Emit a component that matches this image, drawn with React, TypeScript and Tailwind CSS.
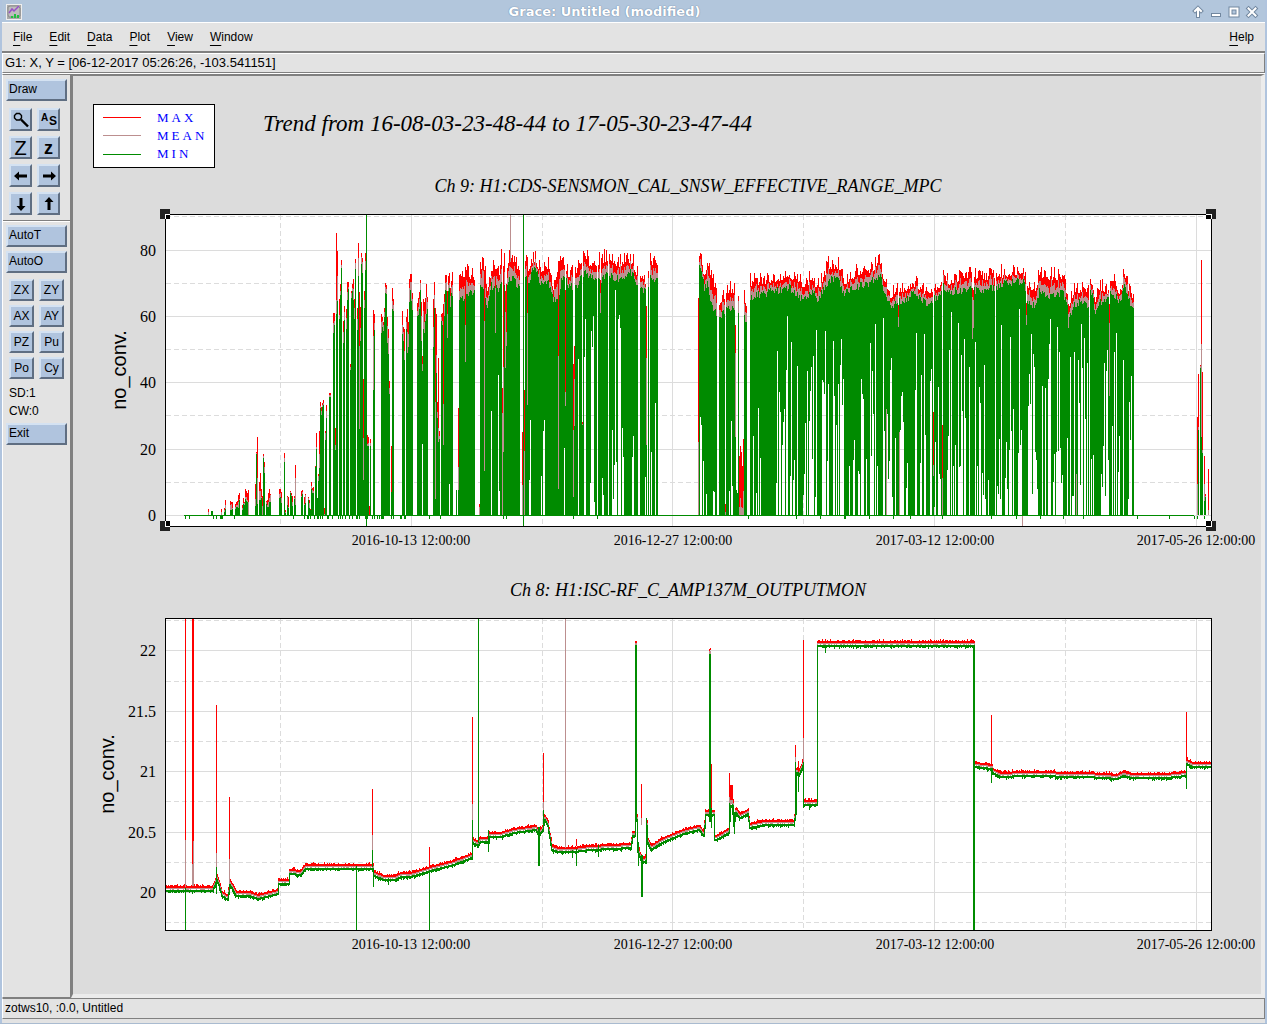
import type { ReactNode } from "react";

const RED = "#ff0000";
const BROWN = "#bc8f8f";
const GREEN = "#008b00";
const GRID = "#dcdcdc";

type Bar = [x: number, max: number, mean: number, min: number];
type Point = [x: number, y: number];

const ZERO = 515;

// small repeatable noise so the traces look the same on every render
function noise(x: number, seed: number) {
  const v = Math.sin(x * 12.9898 + seed * 78.233) * 43758.5453;
  return v - Math.floor(v);
}

const box = (x: number, top: number, bottom: number, w = 1) =>
  bottom > top ? `M${x} ${top}h${w}V${bottom}h${-w}z` : "";

function lerp(points: number[][], x: number, key: number) {
  if (x <= points[0][0]) return points[0][key];
  for (let i = 1; i < points.length; i++) {
    const a = points[i - 1];
    const b = points[i];
    if (x <= b[0]) {
      return a[key] + ((b[key] - a[key]) * (x - a[0])) / (b[0] - a[0] || 1);
    }
  }
  return points[points.length - 1][key];
}

/* ---------- range chart ---------- */

const sparse: Bar[] = [
  [208, 509, 512, 515], [211, 511, 511, 511], [212, 511, 511, 511], [221, 509, 512, 515],
  [224, 508, 510, 512], [225, 500, 505, 509], [230, 501, 505, 510], [231, 502, 504, 510],
  [232, 502, 508, 509], [235, 504, 507, 509], [236, 502, 505, 507], [237, 501, 505, 507],
  [238, 495, 502, 508], [239, 493, 499, 500], [242, 505, 508, 510], [243, 498, 503, 504],
  [244, 502, 503, 505], [245, 489, 497, 499], [246, 491, 497, 501], [247, 493, 500, 502],
  [248, 490, 502, 515], [255, 484, 499, 506], [256, 452, 453, 454], [257, 437, 478, 504],
  [259, 482, 491, 500], [260, 473, 491, 500], [261, 489, 497, 498], [262, 496, 506, 515],
  [263, 454, 456, 458], [264, 462, 467, 473], [266, 501, 502, 504], [267, 500, 505, 507],
  [268, 493, 502, 507], [269, 489, 498, 502], [270, 494, 495, 502], [279, 489, 494, 498],
  [280, 489, 493, 497], [281, 492, 498, 503], [284, 453, 458, 462], [285, 510, 512, 513],
  [287, 496, 497, 505], [288, 497, 507, 508], [290, 491, 492, 493], [291, 493, 495, 496],
  [292, 496, 502, 506], [294, 496, 498, 499], [295, 465, 478, 505], [301, 491, 496, 497],
  [302, 490, 492, 494], [304, 497, 504, 505], [305, 494, 495, 503], [308, 497, 498, 500],
  [309, 500, 503, 508], [310, 509, 510, 510], [311, 482, 486, 489], [312, 488, 490, 493],
  [313, 487, 491, 493], [315, 466, 467, 467], [316, 433, 447, 449], [317, 498, 498, 498],
  [318, 474, 476, 481], [319, 431, 454, 468], [320, 402, 406, 408], [321, 407, 411, 415],
  [322, 403, 405, 407], [323, 400, 403, 405], [324, 508, 514, 515], [325, 431, 433, 440],
  [326, 405, 411, 418], [329, 393, 395, 397], [330, 393, 395, 397], [333, 313, 323, 333],
  [334, 313, 321, 325], [335, 428, 445, 450], [336, 233, 300, 314], [337, 251, 276, 301],
  [339, 299, 315, 319], [340, 284, 291, 295], [341, 260, 265, 268], [343, 321, 332, 343],
  [344, 306, 312, 320], [346, 309, 318, 329], [347, 282, 292, 300], [348, 282, 287, 289],
  [350, 364, 367, 370], [351, 291, 293, 298], [352, 284, 288, 291], [353, 279, 289, 300],
  [354, 299, 308, 319], [355, 259, 263, 269], [357, 308, 319, 330], [358, 243, 258, 276],
  [359, 292, 346, 429], [360, 307, 328, 341], [361, 253, 257, 264], [362, 258, 262, 273],
  [363, 379, 438, 480], [364, 291, 300, 308], [365, 253, 261, 270], [367, 435, 444, 446],
  [368, 437, 443, 446], [369, 506, 515, 515], [370, 439, 443, 446], [373, 310, 336, 390],
  [374, 314, 323, 330], [381, 314, 322, 333], [382, 317, 321, 327], [383, 322, 325, 331],
  [384, 308, 312, 317], [385, 283, 287, 293], [386, 285, 289, 294], [387, 317, 326, 343],
  [388, 329, 338, 354], [389, 381, 388, 394], [391, 446, 492, 492], [392, 288, 301, 309],
  [393, 299, 305, 311], [402, 311, 325, 334], [403, 327, 332, 341], [404, 329, 351, 360],
  [406, 317, 322, 329], [407, 309, 332, 353], [408, 322, 334, 347], [409, 279, 288, 302],
  [410, 274, 282, 290], [411, 274, 282, 301], [412, 293, 299, 310], [417, 303, 311, 316],
  [418, 298, 307, 315], [419, 292, 299, 309], [420, 280, 283, 290], [421, 302, 316, 341],
  [422, 356, 364, 371], [423, 299, 311, 329], [424, 302, 322, 333], [425, 298, 314, 321],
  [426, 284, 297, 314], [427, 297, 302, 309], [433, 299, 327, 347], [434, 282, 295, 308],
  [435, 308, 402, 499], [436, 314, 355, 373], [437, 402, 412, 418], [438, 358, 428, 442],
  [439, 431, 436, 439], [441, 314, 317, 321], [442, 313, 321, 325], [443, 304, 404, 445],
  [444, 294, 302, 316], [445, 275, 283, 290], [446, 275, 282, 291], [447, 291, 314, 338],
  [448, 276, 285, 291], [449, 273, 283, 288], [450, 288, 296, 307], [451, 281, 287, 293],
  [452, 272, 285, 296], [456, 490, 490, 490], [458, 408, 467, 490],
];

// columns that drop out of the dense bands
const dropouts: Bar[] = [
  [465, 267, 325, 362], [479, 504, 507, 515], [484, 270, 321, 471], [495, 269, 288, 333],
  [502, 388, 413, 515], [503, 266, 367, 452], [505, 291, 312, 368], [506, 284, 332, 346],
  [522, 432, 485, 515], [524, 390, 451, 515], [527, 257, 313, 405], [558, 261, 356, 489],
  [565, 290, 392, 406], [573, 364, 430, 497], [574, 346, 379, 426], [582, 422, 424, 425],
  [600, 280, 293, 313], [646, 306, 358, 445], [698, 298, 442, 515], [725, 504, 512, 515],
  [735, 325, 353, 437], [736, 490, 490, 490], [737, 493, 493, 493], [738, 296, 301, 313],
  [739, 456, 507, 515], [740, 446, 498, 515], [741, 452, 507, 515], [742, 466, 508, 515],
  [743, 439, 491, 515], [898, 305, 317, 327], [933, 412, 465, 476], [942, 425, 478, 515],
  [972, 288, 297, 339], [973, 290, 300, 328], [1026, 303, 315, 325], [1068, 304, 314, 328],
  [1109, 304, 323, 396], [1197, 417, 484, 515], [1198, 374, 427, 430], [1200, 365, 366, 368],
  [1201, 260, 344, 437], [1202, 372, 450, 453], [1204, 456, 484, 501], [1205, 494, 496, 497],
  [1208, 469, 510, 515],
];

// envelopes of the dense bands: x, max, min
const bands: number[][][] = [
  [[459, 273, 300], [474, 277, 290]],
  [
    [480, 265, 284], [484, 268, 290], [487, 288, 306], [491, 272, 285], [494, 262, 285],
    [499, 272, 290], [501, 256, 280], [504, 262, 285], [507, 270, 285], [509, 258, 275],
    [515, 262, 280], [519, 275, 288],
  ],
  [
    [525, 260, 275], [528, 268, 285], [532, 260, 268], [536, 262, 270], [540, 270, 282],
    [548, 266, 280], [553, 288, 300], [557, 270, 300], [561, 262, 280], [565, 262, 275],
    [567, 275, 286], [577, 270, 285], [584, 258, 270], [590, 264, 275], [600, 262, 280],
    [608, 258, 272], [620, 265, 280], [626, 258, 272], [632, 262, 272], [637, 275, 283],
  ],
  [[640, 273, 285], [645, 284, 292]],
  [[648, 273, 285], [650, 260, 274], [657, 266, 280]],
  [[699, 262, 268], [702, 265, 275], [704, 278, 288], [707, 265, 280], [710, 275, 300], [716, 290, 312]],
  [[719, 302, 318], [724, 300, 310], [726, 290, 308], [734, 290, 308]],
  [[744, 298, 312], [746, 305, 325]],
  [
    [750, 284, 295], [765, 281, 292], [790, 275, 287], [800, 284, 297], [806, 284, 298],
    [812, 277, 288], [817, 291, 301], [828, 266, 279], [838, 266, 277], [843, 283, 292],
    [857, 273, 285], [867, 273, 283], [880, 262, 275], [885, 288, 295], [890, 295, 305],
    [907, 288, 297], [913, 283, 293], [926, 292, 302], [940, 285, 294], [943, 268, 281],
    [946, 283, 292], [970, 274, 287], [977, 279, 290], [995, 275, 286], [1003, 275, 283],
    [1023, 270, 279], [1027, 284, 300], [1035, 290, 305], [1039, 275, 290], [1050, 277, 295],
    [1063, 277, 292], [1069, 305, 316], [1073, 293, 305], [1083, 288, 299], [1088, 294, 305],
    [1090, 276, 286], [1095, 300, 310], [1100, 288, 300], [1108, 291, 300], [1111, 278, 290],
    [1120, 293, 302], [1124, 271, 284], [1128, 288, 297], [1133, 298, 309],
  ],
];

// bottom gaps, x:y in thirds of a unit from the block origin; y = 0 empties the column
const gapBlocks: [number, string][] = [
  [160, "787:716"],
  [
    420,
    "88:837 214:618 235:510 238:858 328:825 331:645 364:813 370:678 373:645 433:729 475:462 493:456 496:342 511:834 514:378 517:426 520:333 523:891 532:0 547:819 550:870 565:0 577:675 580:882 583:780 586:255 589:771 595:342 598:330 601:369 607:669 610:756 637:756 640:693 676:816 682:0 688:0 694:741 706:594",
  ],
  [
    680,
    "61:636 64:660 70:768 79:867 100:858 103:861 148:858 154:648 157:843 220:693 229:864 235:609 241:759 289:834 292:438 298:561 301:621 307:720 310:651 313:612 319:495 322:333 331:813 334:411 340:825 343:765 352:483 370:870 373:807 376:654 382:498 388:648 391:558 394:486 397:762 400:453 406:876 409:375 427:525 430:531 433:567 436:378 442:768 445:537 460:408 463:573 469:660 475:537 481:480 484:402 487:600 490:522 508:783 520:765 523:705 535:798 538:807 544:522 547:567 550:582 559:762 571:414 574:753 577:498 580:627 586:357 592:783 610:339 613:678 619:612 622:627 625:822 628:768 631:495 634:459 637:876 646:699 658:681 661:675 664:573 667:561 670:651 679:849 682:774 706:555 709:384 721:774 724:510 733:387 736:690 751:528 754:492 763:906 766:711 775:546 778:807 781:822",
  ],
  [
    940,
    "1:822 22:795 25:693 28:435 34:321 40:783 46:720 55:354 58:786 61:783 64:450 67:618 73:402 76:639 88:486 106:411 112:783 118:546 121:594 127:804 130:870 133:480 136:882 145:825 166:0 172:843 175:867 178:702 181:882 184:360 196:819 199:711 202:852 208:735 211:396 214:678 220:612 235:744 238:312 241:720 244:675 265:603 268:507 271:597 274:387 277:867 280:447 283:486 286:741 289:765 292:852 307:543 316:549 325:522 328:417 331:342 340:831 343:747 349:741 352:366 355:738 358:441 361:729 364:834 367:810 382:699 391:456 397:873 400:873 403:441 409:807 415:465 418:594 421:840 424:357 427:489 433:399 436:642 442:474 448:0 454:762 460:750 484:807 487:846 490:723 493:474 496:873 499:498 502:435 505:765 517:663 523:441 529:384 535:801 538:693 550:465 565:882 568:591 571:705 574:513",
  ],
];

const ticksBelow = [
  185, 189, 213, 216, 220, 221, 222, 234, 293, 304, 307, 308, 310, 314, 317, 318, 320, 322, 327,
  328, 332, 338, 340, 342, 345, 349, 352, 356, 357, 359, 365, 366, 367, 372, 374, 377, 379, 381,
  382, 383, 391, 393, 400, 401, 404, 405, 429, 440, 503, 506, 573, 597, 748, 796, 820, 844, 845,
  869, 893, 910, 942, 991, 1016, 1040, 1063, 1083, 1137, 1169, 1194, 1197, 1204,
];

function rangePaths() {
  const columns = new Map<number, number[]>();
  for (const band of bands) {
    for (let x = band[0][0]; x <= band[band.length - 1][0]; x++) {
      const n = noise(x, 1);
      const max = Math.round(lerp(band, x, 1) + 3 - n * n * 14);
      const min = Math.round(lerp(band, x, 2) - 3 + noise(x, 2) * 8);
      const mean = Math.round(max + (min - max) * (0.4 + noise(x, 3) * 0.3));
      columns.set(x, [max, mean, min, ZERO]);
    }
  }
  for (const [x, max, mean, min] of [...sparse, ...dropouts]) {
    columns.set(x, [max, mean, min, ZERO]);
  }
  for (const [origin, list] of gapBlocks) {
    for (const item of list.split(" ")) {
      const [dx, dy] = item.split(":").map(Number);
      const x = origin + Math.floor(dx / 3);
      const column = columns.get(x);
      if (dy === 0) columns.delete(x);
      else if (column) column[3] = 205 + Math.round(dy / 3);
    }
  }
  let max = "";
  let mean = "";
  let min = "";
  columns.forEach(([a, b, c, bottom], x) => {
    max += box(x, a, b);
    mean += box(x, b, c);
    min += box(x, c, bottom);
  });
  mean += box(510, 215, 262) + box(886, 409, ZERO) + box(899, 432, ZERO);
  mean += box(1076, 474, ZERO) + box(1022, 516, 526) + box(547, 491, ZERO);
  min += box(366, 215, 526) + box(523, 215, 526) + box(184, 515, 516, 1010);
  min += ticksBelow.map((x) => box(x, 516, 519)).join("");
  return { max, mean, min };
}

/* ---------- RF output chart ---------- */

const level: Point[] = [
  [166, 888], [212, 888], [216, 877], [218, 882], [221, 893], [227, 897], [229, 882], [232, 887],
  [235, 893], [248, 893], [257, 896], [277, 891], [278, 881], [288, 881], [289, 871], [300, 872],
  [305, 866], [372, 866], [373, 873], [383, 877], [395, 877], [400, 874], [410, 874], [430, 868],
  [453, 862], [471, 855], [472, 840], [477, 843], [480, 839], [488, 839], [489, 834], [500, 834],
  [513, 830], [535, 827], [538, 833], [542, 827], [544, 817], [547, 823], [551, 847], [557, 849],
  [573, 849], [590, 847], [630, 845], [632, 833], [634, 833], [635, 817], [636, 817], [637, 848],
  [640, 857], [642, 860], [645, 858], [646, 823], [647, 840], [650, 847], [663, 839], [683, 831],
  [698, 827], [703, 833], [705, 812], [713, 812], [714, 837], [718, 836], [728, 830], [730, 803],
  [732, 803], [733, 823], [735, 810], [739, 815], [747, 811], [749, 825], [764, 822], [793, 822],
  [795, 810], [796, 770], [798, 773], [802, 763], [803, 802], [816, 802], [817, 643], [973, 643],
  [974, 764], [991, 766], [992, 770], [999, 774], [1024, 773], [1086, 774], [1117, 776],
  [1122, 773], [1131, 775], [1165, 775], [1185, 773], [1186, 761], [1192, 764], [1210, 764],
];

// x, top, bottom, width
const redSpikes = [
  [185, 619, 840, 1], [192, 619, 864, 1], [193, 619, 841, 1], [216, 705, 853, 1],
  [229, 797, 859, 1], [372, 789, 835, 1], [429, 847, 868, 1], [472, 717, 804, 1],
  [543, 753, 802, 1], [576, 839, 846, 1], [635, 641, 643, 2], [641, 784, 818, 1],
  [709, 649, 651, 1], [710, 648, 650, 1], [711, 764, 810, 1], [729, 773, 797, 1],
  [730, 785, 800, 3], [795, 745, 757, 1], [798, 761, 772, 1], [803, 640, 738, 1],
  [974, 706, 718, 1], [991, 715, 768, 1], [1186, 712, 762, 1],
];
const brownSpikes = [
  [185, 840, 887, 1], [192, 864, 886, 1], [193, 841, 886, 1], [216, 853, 867, 1],
  [229, 859, 882, 1], [372, 835, 850, 1], [472, 804, 820, 1], [543, 802, 810, 1],
  [565, 619, 848, 1], [635, 643, 645, 2], [641, 818, 825, 1], [709, 651, 654, 2],
  [729, 797, 803, 1], [730, 800, 804, 3], [795, 757, 762, 1], [803, 738, 762, 1],
  [974, 718, 721, 1],
];
const greenSpikes = [
  [185, 888, 930, 1], [216, 867, 894, 1], [356, 866, 930, 1], [372, 850, 867, 1],
  [373, 874, 887, 1], [388, 878, 885, 1], [429, 870, 930, 1], [472, 820, 860, 1],
  [478, 619, 843, 1], [488, 830, 852, 1], [538, 827, 866, 2], [543, 810, 826, 1],
  [572, 850, 858, 1], [576, 849, 866, 1], [598, 845, 857, 1], [635, 645, 820, 2],
  [638, 842, 866, 1], [641, 855, 897, 2], [646, 818, 864, 1], [709, 654, 822, 2],
  [711, 808, 828, 1], [729, 803, 833, 1], [732, 804, 815, 1], [734, 812, 834, 1],
  [795, 762, 815, 1], [798, 772, 792, 1], [803, 762, 803, 1], [809, 804, 810, 1],
  [825, 645, 653, 1], [973, 646, 930, 1], [974, 721, 930, 1], [991, 768, 783, 1],
  [1186, 764, 789, 1],
];

function trace(offset: number, thickness: number, seed: number, grow: number) {
  let d = "";
  for (let x = 166; x <= 1210; x++) {
    const a = lerp(level, x - 1, 1);
    const b = lerp(level, x, 1);
    const top = Math.round(Math.min(a, b)) + offset;
    const bottom = Math.round(Math.max(a, b)) + offset + thickness;
    const n = noise(x, seed);
    const extra = n > 0.93 ? grow * 2 : n > 0.55 ? grow : 0;
    d += box(x, top + Math.min(extra, 0), bottom + Math.max(extra, 0));
  }
  return d;
}

const spikes = (list: number[][]) =>
  list.map(([x, top, bottom, w]) => box(x, top, bottom, w)).join("");

const range = rangePaths();
const output = {
  max: trace(-2, 2, 4, -1) + spikes(redSpikes),
  mean: trace(0, 1, 5, 1) + spikes(brownSpikes),
  min: trace(2, 2, 6, 1) + spikes(greenSpikes),
};

type PlotProps = {
  top: number;
  title: string;
  labelX: number;
  ticks: [number, string][];
  minor: number[];
  series: { max: string; mean: string; min: string };
};

function Plot({ top, title, labelX, ticks, minor, series }: PlotProps) {
  const bottom = top + 312;
  return (
    <g>
      <text x="688" y={top - 22} textAnchor="middle" className="text-[18px] italic">
        {title}
      </text>
      <rect x="165" y={top} width="1047" height="313" fill="#fff" />
      <g stroke={GRID} shapeRendering="crispEdges">
        {ticks.map(([y]) => (
          <line key={y} x1="166" x2="1211" y1={y + 0.5} y2={y + 0.5} />
        ))}
        {minor.map((y) => (
          <line key={y} x1="166" x2="1211" y1={y + 0.5} y2={y + 0.5} strokeDasharray="5 3" />
        ))}
        {[411, 672, 934, 1196].map((x) => (
          <line key={x} x1={x + 0.5} x2={x + 0.5} y1={top} y2={bottom} />
        ))}
        {[280, 542, 803, 1065].map((x) => (
          <line key={x} x1={x + 0.5} x2={x + 0.5} y1={top + 1} y2={bottom} strokeDasharray="5 3" />
        ))}
      </g>
      <g shapeRendering="crispEdges">
        <path d={series.max} fill={RED} />
        <path d={series.mean} fill={BROWN} />
        <path d={series.min} fill={GREEN} />
        <rect x="165.5" y={top + 0.5} width="1046" height="312" fill="none" stroke="#000" />
      </g>
      {ticks.map(([y, label]) => (
        <text key={label} x="156" y={y + 6} textAnchor="end" className="text-[16px]">
          {label}
        </text>
      ))}
      {[
        [411, "2016-10-13 12:00:00"],
        [673, "2016-12-27 12:00:00"],
        [935, "2017-03-12 12:00:00"],
        [1196, "2017-05-26 12:00:00"],
      ].map(([x, label]) => (
        <text key={label} x={x} y={bottom + 19} textAnchor="middle" className="text-[14px]">
          {label}
        </text>
      ))}
      <text
        transform={`translate(${labelX} ${top + 156}) rotate(-90)`}
        textAnchor="middle"
        className="font-['Liberation_Sans',sans-serif] text-[20px]"
      >
        no_conv.
      </text>
    </g>
  );
}

function Handle({ x, y, right, low }: { x: number; y: number; right?: boolean; low?: boolean }) {
  const ix = right ? x : x + 6;
  const iy = low ? y : y + 6;
  return (
    <g shapeRendering="crispEdges">
      <rect x={x} y={y} width="10" height="10" fill="#222" />
      <rect x={right ? x : x + 5} y={low ? y : y + 5} width={right ? 6 : 5} height={low ? 6 : 5} fill="#fff" />
      <rect x={ix} y={iy} width={right ? 5 : 4} height={low ? 5 : 4} fill="#000" />
    </g>
  );
}

function Graph() {
  return (
    <svg
      viewBox="73 76 1188 918"
      className="block w-full font-['Liberation_Serif',serif]"
      role="img"
      aria-label="Trend graphs"
    >
      <rect x="93.5" y="104.5" width="121" height="63" fill="#fff" stroke="#000" />
      {[
        { name: "MAX", color: RED, line: 117, text: 122 },
        { name: "MEAN", color: BROWN, line: 135, text: 140 },
        { name: "MIN", color: GREEN, line: 154, text: 158 },
      ].map((item) => (
        <g key={item.name}>
          <rect x="103" y={item.line} width="38" height="1" fill={item.color} />
          <text x="157" y={item.text} fill="#0000ff" className="text-[13px] tracking-[3px]">
            {item.name}
          </text>
        </g>
      ))}
      <text x="263" y="131" className="text-[23px] italic">
        Trend from 16-08-03-23-48-44 to 17-05-30-23-47-44
      </text>
      <Plot
        top={214}
        title="Ch 9: H1:CDS-SENSMON_CAL_SNSW_EFFECTIVE_RANGE_MPC"
        labelX={126}
        ticks={[[250, "80"], [316, "60"], [382, "40"], [449, "20"], [515, "0"]]}
        minor={[216, 283, 349, 415, 482]}
        series={range}
      />
      <Plot
        top={618}
        title="Ch 8: H1:ISC-RF_C_AMP137M_OUTPUTMON"
        labelX={114}
        ticks={[[650, "22"], [711, "21.5"], [771, "21"], [832, "20.5"], [892, "20"]]}
        minor={[620, 681, 741, 801, 862, 922]}
        series={output}
      />
      <Handle x={160} y={209} />
      <Handle x={1206} y={209} right />
      <Handle x={160} y={521} low />
      <Handle x={1206} y={521} right low />
    </svg>
  );
}

/* ---------- window parts ---------- */

function ToolButton({ size, label, children }: { size: "wide" | "icon" | "pair"; label?: string; children: ReactNode }) {
  const shape = {
    wide: "h-[22px] w-full px-px pb-0.5 text-left",
    icon: "flex size-[23px] items-center justify-center",
    pair: "h-[22px] w-[25px] text-center",
  }[size];
  return (
    <button
      aria-label={label}
      className={`border-2 border-t-[#d4e2f2] border-r-[#5f6e82] border-b-[#5f6e82] border-l-[#d4e2f2] bg-[#b0c4de] leading-4 ${shape}`}
    >
      {children}
    </button>
  );
}

function MenuItem({ name }: { name: string }) {
  return (
    <button>
      <span className="underline underline-offset-4">{name[0]}</span>
      {name.slice(1)}
    </button>
  );
}

const arrows = [
  ["Scroll left", "M1 8l5-4.500v3h8v3H6v3z"],
  ["Scroll right", "M15 8l-5-4.500v3H2v3h8v3z"],
  ["Scroll down", "M8 15l-4.500-5h3V2h3v8h3z"],
  ["Scroll up", "M8 1L3.500 6h3v8h3V6h3z"],
];

function Toolbar() {
  return (
    <div className="w-[69px] border border-t-[#808080] border-r-[#808080] border-b-[#808080] border-l-white bg-[#e3e3e3]">
      <div className="border-b border-[#808080] px-[3px] pt-1 pb-[5px]">
        <ToolButton size="wide">Draw</ToolButton>
        <div className="mt-[7px] grid grid-cols-[23px_23px] gap-[5px] pl-[3px]">
          <ToolButton size="icon" label="Zoom">
            <svg viewBox="0 0 16 16" className="size-4" fill="none" stroke="#000">
              <path d="M3.500 1.500h3l2 2v2.500l-2 2h-3l-2-2v-2.500z" strokeWidth="1.400" />
              <path d="M8 7.500l7 7" strokeWidth="2.400" />
            </svg>
          </ToolButton>
          <ToolButton size="icon" label="Autoscale">
            <svg viewBox="0 0 18 18" className="size-[18px] font-['Liberation_Sans',sans-serif] font-bold">
              <text x="1" y="10" className="text-[10px]">A</text>
              <text x="9" y="14" className="text-[12px]">S</text>
            </svg>
          </ToolButton>
          <ToolButton size="icon" label="Zoom in">
            <span className="text-[20px] leading-5">Z</span>
          </ToolButton>
          <ToolButton size="icon" label="Zoom out">
            <span className="text-[18px] leading-4 font-bold">z</span>
          </ToolButton>
          {arrows.map(([label, d]) => (
            <ToolButton key={label} size="icon" label={label}>
              <svg viewBox="0 0 16 16" className="size-4">
                <path d={d} />
              </svg>
            </ToolButton>
          ))}
        </div>
      </div>
      <div className="border-t border-white px-[3px] pt-[3px]">
        <ToolButton size="wide">AutoT</ToolButton>
        <div className="h-1" />
        <ToolButton size="wide">AutoO</ToolButton>
        <div className="mt-1.5 grid grid-cols-[25px_25px] gap-x-[5px] gap-y-1 pl-[3px]">
          {["ZX", "ZY", "AX", "AY", "PZ", "Pu", "Po", "Cy"].map((name) => (
            <ToolButton key={name} size="pair">
              {name}
            </ToolButton>
          ))}
        </div>
        <div className="mt-[5px] mb-[3px] pl-[3px] leading-[18px]">
          <div>SD:1</div>
          <div>CW:0</div>
        </div>
        <ToolButton size="wide">Exit</ToolButton>
      </div>
    </div>
  );
}

function TitleBar() {
  return (
    <div className="flex h-[22px] items-center bg-[#b2c6dc] px-1 pt-px">
      <svg viewBox="0 0 16 16" className="size-4">
        <rect width="16" height="16" fill="#eee" />
        <rect x="1" y="1" width="14" height="14" fill="#aaa" />
        <path d="M2 3l2-1h8l2 2v8l-2 1H3l-1-2z" fill="#bdbdbd" stroke="#8a8a8a" />
        <path d="M3 9l3-4 2 2 5-5" fill="none" stroke="#9a50c8" strokeWidth="1.500" />
        <path d="M5 14v-2h2v2zM8 14v-4h2v4zM11 14v-3h2v3z" fill="#22c040" />
      </svg>
      <div className="flex-1 pt-px pr-1 text-center font-['DejaVu_Sans',sans-serif] text-[13px] leading-5 font-bold text-white [text-shadow:0_0_1px_#7088a4,0_0_1px_#7088a4]">
        Grace: Untitled (modified)
      </div>
      <div className="flex gap-1 pr-0.5">
        {[
          ["Keep above", "M7 11V5M4 6l3-3 3 3"],
          ["Minimize", "M4 10h6"],
          ["Maximize", "M3.500 3.500h7v7h-7z"],
          ["Close", "M3.500 3.500l7 7M10.500 3.500l-7 7"],
        ].map(([label, d]) => (
          <button key={label} aria-label={label} className="size-3.5">
            <svg viewBox="0 0 14 14" className="size-3.5" fill="none" strokeLinecap="square">
              <path d={d} stroke="#71879f" strokeWidth="4" />
              <path d={d} stroke="#fff" strokeWidth="2" />
            </svg>
          </button>
        ))}
      </div>
    </div>
  );
}

export default function App() {
  return (
    <div className="flex min-h-screen flex-col border-b border-[#a9bbd0] bg-[#b0c4de] px-0.5 font-['Liberation_Sans',sans-serif] text-xs text-black">
      <TitleBar />
      <div className="flex h-[31px] items-center gap-[17px] border-t border-b-2 border-t-white border-b-[#808080] bg-[#e3e3e3] pr-[11px] pl-[11px]">
        {["File", "Edit", "Data", "Plot", "View", "Window"].map((name) => (
          <MenuItem key={name} name={name} />
        ))}
        <div className="flex-1" />
        <MenuItem name="Help" />
      </div>
      <div className="border-b border-white bg-[#e3e3e3]">
        <div className="h-5 border border-t-white border-r-[#808080] border-b-[#808080] border-l-white pl-0.5 text-[13px] leading-[18px]">
          G1: X, Y = [06-12-2017 05:26:26, -103.541151]
        </div>
      </div>
      <div className="flex flex-1">
        <Toolbar />
        <div className="min-w-0 flex-1 border-t-2 border-r-4 border-b-4 border-l-2 border-t-[#808080] border-r-[#ececec] border-b-[#ececec] border-l-[#808080] bg-[#dcdcdc]">
          <Graph />
        </div>
      </div>
      <div className="bg-[#e3e3e3] pb-1">
        <div className="h-[21px] border border-t-[#808080] border-r-[#808080] border-b-[#808080] border-l-white pl-0.5 leading-[19px]">
          zotws10, :0.0, Untitled
        </div>
      </div>
    </div>
  );
}
